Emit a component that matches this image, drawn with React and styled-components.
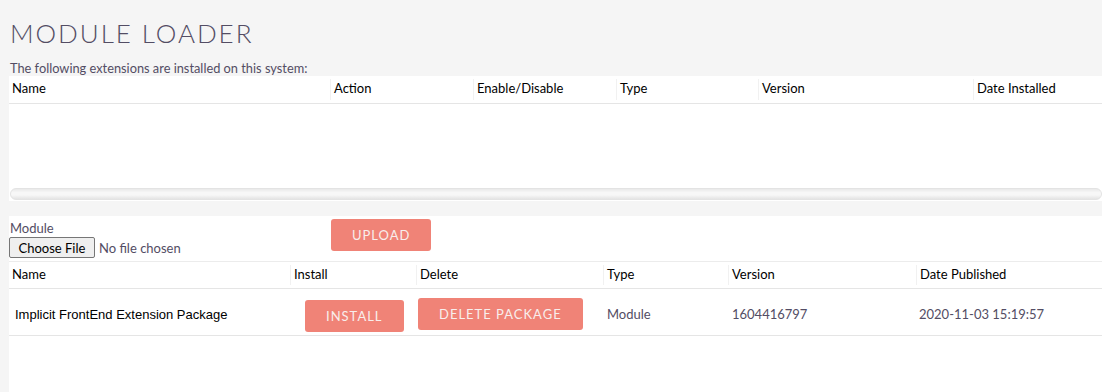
import React from "react";
import styled, { createGlobalStyle } from "styled-components";

const Global = createGlobalStyle`
  html, body { margin: 0; padding: 0; overflow: hidden; }
  body { background: #f5f5f5; font-family: Lato, "Noto Sans", sans-serif; color: #534d64; }
`;

const Page = styled.div`
  padding-left: 9px;
  min-height: 392px;
  display: flex;
  flex-direction: column;
`;

const Title = styled.h1`
  margin: 0;
  padding: 18px 0 0 1px;
  font-family: Lato, sans-serif;
  font-weight: 300;
  font-size: 26px;
  line-height: 30px;
  letter-spacing: 1.95px;
  color: #534d64;
`;

const Intro = styled.p`
  margin: 0;
  padding: 12px 0 0 1px;
  font-size: 12.8px;
  line-height: 16px;
  height: 16px;
`;

const Panel = styled.div`
  background: #fff;
  display: flex;
  flex-direction: column;
  height: ${(p) => p.$h || "auto"};
  flex: ${(p) => (p.$grow ? 1 : "none")};
  margin-top: ${(p) => p.$mt || 0};
`;

const Grid = styled.div`
  display: grid;
  grid-template-columns: ${(p) => p.$cols};
  border-top: ${(p) => (p.$top ? "1px solid #ececec" : "none")};
  border-bottom: 1px solid #e5e5e5;
  height: ${(p) => p.$h};
  box-sizing: border-box;
`;

const Th = styled.div`
  font-size: 13px;
  color: #000;
  padding: 0 3px 3px;
  display: flex;
  align-items: center;
  border-left: ${(p) => (p.$first ? "none" : "1px solid #f1f1f1")};
  margin: 3px 0;
  white-space: nowrap;
`;

const Td = styled.div`
  font-size: 13px;
  color: #534d64;
  padding-left: ${(p) => p.$pl || "4px"};
  padding-top: ${(p) => p.$pt || "4px"};
  display: flex;
  align-items: ${(p) => (p.$top ? "flex-start" : "center")};
  white-space: nowrap;
`;

const PkgName = styled.span`
  font-family: "Liberation Sans", Arial, sans-serif;
  font-size: 13px;
  color: #000;
`;

const Scroller = styled.div`
  margin: auto 0 1px 1px;
  height: 12px;
  border-radius: 6px;
  box-sizing: border-box;
  border: 1px solid #e3e3e3;
  background: linear-gradient(to bottom, #e9e9e9 0%, #f7f7f7 35%, #f7f7f7 60%, #e4e4e4 100%);
`;

const UploadForm = styled.div`
  display: grid;
  grid-template-columns: 322px auto;
  height: 45px;
`;

const FieldCol = styled.div`
  display: flex;
  flex-direction: column;
  padding-top: 4px;
`;

const Label = styled.label`
  font-size: 13px;
  line-height: 16px;
  padding-left: 1px;
  color: #534d64;
`;

const FileInput = styled.input`
  font-family: Lato, sans-serif;
  font-size: 13px;
  color: #534d64;
  margin: 1px 0 0 0;
  &::file-selector-button {
    font-family: Lato, sans-serif;
    font-size: 13px;
    color: #000;
    height: 21px;
    width: 86px;
    padding: 0;
    margin-right: 4px;
    border: 1px solid #767676;
    border-radius: 2px;
    background: #efefef;
  }
`;

const Button = styled.button`
  height: 32px;
  padding: 0 21px;
  border: none;
  border-radius: 3px;
  background: #f08377;
  color: #f8eeec;
  font-family: Lato, sans-serif;
  font-size: 13px;
  letter-spacing: 1px;
  text-transform: uppercase;
  cursor: pointer;
  margin-top: ${(p) => p.$mt || "0"};
  align-self: flex-start;
`;

const cols1 = "321px 143px 143px 142px 215px 1fr";
const cols2 = "281px 126px 187px 125px 188px 1fr";

export default function App() {
  const h1 = ["Name", "Action", "Enable/Disable", "Type", "Version", "Date Installed"];
  const h2 = ["Name", "Install", "Delete", "Type", "Version", "Date Published"];
  return (
    <>
      <Global />
      <Page>
        <Title>MODULE LOADER</Title>
        <Intro>The following extensions are installed on this system:</Intro>
        <Panel $h="125px">
          <Grid $cols={cols1} $h="28px">
            {h1.map((t, i) => (
              <Th key={t} $first={i === 0}>{t}</Th>
            ))}
          </Grid>
          <Scroller />
        </Panel>
        <Panel $grow $mt="15px">
          <UploadForm>
            <FieldCol>
              <Label htmlFor="mod">Module</Label>
              <FileInput id="mod" type="file" />
            </FieldCol>
            <div>
              <Button $mt="3px">Upload</Button>
            </div>
          </UploadForm>
          <Grid $cols={cols2} $h="28px" $top>
            {h2.map((t, i) => (
              <Th key={t} $first={i === 0}>{t}</Th>
            ))}
          </Grid>
          <Grid $cols={cols2} $h="47px">
            <Td $pl="6px"><PkgName>Implicit FrontEnd Extension Package</PkgName></Td>
            <Td $top $pl="15px" $pt="11px"><Button>Install</Button></Td>
            <Td $top $pl="2px" $pt="9px"><Button>Delete Package</Button></Td>
            <Td>Module</Td>
            <Td>1604416797</Td>
            <Td $pl="3px">2020-11-03 15:19:57</Td>
          </Grid>
        </Panel>
      </Page>
    </>
  );
}
